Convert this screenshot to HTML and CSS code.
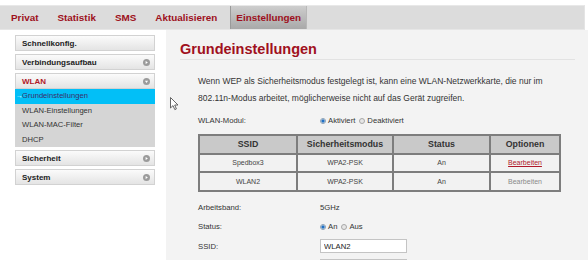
FILE: index.html
```html
<!DOCTYPE html>
<html lang="de">
<head>
    <meta charset="UTF-8">
    <meta name="viewport" content="width=device-width, initial-scale=1.0">
    <title>Grundeinstellungen</title>
    <link rel="stylesheet" href="styles.css">
</head>
<body>
    <nav class="mainnav">
        <a class="nav-link">Privat</a>
        <a class="nav-link">Statistik</a>
        <a class="nav-link">SMS</a>
        <a class="nav-link">Aktualisieren</a>
        <a class="nav-link active">Einstellungen</a>
    </nav>

    <div class="page">
        <aside class="sidebar">
            <div class="menu-item">Schnellkonfig.</div>
            <div class="menu-item">Verbindungsaufbau
                <svg class="toggle" viewBox="0 0 8 8"><circle cx="4" cy="4" r="4" fill="#9b9b9b"/><path d="M3 2.2 L5.6 4 L3 5.8 Z" fill="#fff"/></svg>
            </div>
            <div class="menu-item open">WLAN
                <svg class="toggle" viewBox="0 0 8 8"><circle cx="4" cy="4" r="4" fill="#9b9b9b"/><path d="M2.2 3 L5.8 3 L4 5.6 Z" fill="#fff"/></svg>
            </div>
            <ul class="submenu">
                <li class="current"><span class="arrow">&rarr;</span>Grundeinstellungen</li>
                <li>WLAN-Einstellungen</li>
                <li>WLAN-MAC-Filter</li>
                <li>DHCP</li>
            </ul>
            <div class="menu-item">Sicherheit
                <svg class="toggle" viewBox="0 0 8 8"><circle cx="4" cy="4" r="4" fill="#9b9b9b"/><path d="M3 2.2 L5.6 4 L3 5.8 Z" fill="#fff"/></svg>
            </div>
            <div class="menu-item">System
                <svg class="toggle" viewBox="0 0 8 8"><circle cx="4" cy="4" r="4" fill="#9b9b9b"/><path d="M3 2.2 L5.6 4 L3 5.8 Z" fill="#fff"/></svg>
            </div>
        </aside>

        <main class="content">
            <h1>Grundeinstellungen</h1>
            <div class="section">
                <p class="note">Wenn WEP als Sicherheitsmodus festgelegt ist, kann eine WLAN-Netzwerkkarte, die nur im 802.11n-Modus arbeitet, m&ouml;glicherweise nicht auf das Ger&auml;t zugreifen.</p>

                <div class="form-row">
                    <span class="label">WLAN-Modul:</span>
                    <span class="field">
                        <span class="radio checked"></span>Aktiviert
                        <span class="radio"></span>Deaktiviert
                    </span>
                </div>

                <table class="ssid-table">
                    <tr>
                        <th class="c1">SSID</th>
                        <th class="c2">Sicherheitsmodus</th>
                        <th class="c3">Status</th>
                        <th class="c4">Optionen</th>
                    </tr>
                    <tr>
                        <td>Spedbox3</td>
                        <td>WPA2-PSK</td>
                        <td>An</td>
                        <td><a class="edit">Bearbeiten</a></td>
                    </tr>
                    <tr>
                        <td>WLAN2</td>
                        <td>WPA2-PSK</td>
                        <td>An</td>
                        <td><span class="edit-off">Bearbeiten</span></td>
                    </tr>
                </table>

                <div class="form-row first">
                    <span class="label">Arbeitsband:</span>
                    <span class="field">5GHz</span>
                </div>
                <div class="form-row">
                    <span class="label">Status:</span>
                    <span class="field">
                        <span class="radio checked"></span>An
                        <span class="radio"></span>Aus
                    </span>
                </div>
                <div class="form-row">
                    <span class="label">SSID:</span>
                    <span class="field"><input class="text-input" type="text" value="WLAN2"></span>
                </div>
                <div class="form-row">
                    <span class="label"></span>
                    <span class="field"><input class="text-input" type="text" value=""></span>
                </div>
            </div>
        </main>
    </div>

    <svg class="cursor" viewBox="0 0 9 14"><path d="M0.5 0.5 L0.5 11 L3 8.6 L4.8 12.6 L6.4 11.9 L4.7 8 L8 8 Z" fill="#fff" stroke="#555" stroke-width="0.9"/></svg>
</body>
</html>
```

FILE: styles.css
```css
* {
    margin: 0;
    padding: 0;
    box-sizing: border-box;
}

body {
    font-family: 'Liberation Sans', Arial, sans-serif;
    background: #ffffff;
    color: #333333;
    width: 588px;
    height: 260px;
    overflow: hidden;
    position: relative;
}

/* top navigation */
.mainnav {
    display: flex;
    align-items: stretch;
    margin: 5px 3px 0 0;
    height: 25px;
    padding-left: 5px;
    background: #dcdcdc;
    border-top: 1px solid #e8e8e8;
    border-right: 1px solid #e4e4e4;
    border-bottom: 1px solid #e6e6e6;
}

.nav-link {
    display: flex;
    align-items: center;
    padding: 0 6px;
    margin-right: 7px;
    font-size: 9.9px;
    font-weight: bold;
    color: #9e1020;
}

.nav-link.active {
    background: linear-gradient(#cdcdcd, #a9a9a9);
    border-left: 1px solid #9a9a9a;
    border-right: 1px solid #b8b8b8;
    padding: 0 5px;
}

/* page layout */
.page {
    display: flex;
    height: 230px;
}

.sidebar {
    width: 166px;
    flex-shrink: 0;
    padding: 5px 11px 0 15px;
    background: #ffffff;
}

.menu-item {
    display: flex;
    align-items: center;
    justify-content: space-between;
    height: 16px;
    margin-bottom: 3px;
    padding: 0 4px 0 6px;
    font-size: 8px;
    font-weight: bold;
    color: #222222;
    background: linear-gradient(#fbfbfb, #e4e4e4);
    border: 1px solid #d2d2d2;
}

.menu-item.open {
    color: #b0182a;
    margin-bottom: 0;
}

.toggle {
    width: 7px;
    height: 7px;
}

.submenu {
    list-style: none;
    background: #d5d5d5;
    margin-bottom: 3px;
}

.submenu li {
    height: 14.5px;
    line-height: 14.5px;
    padding-left: 7px;
    font-size: 7.6px;
    color: #333333;
}

.submenu li.current {
    background: #02bff7;
    color: #3b2d69;
    padding-left: 1px;
}

.arrow {
    display: inline-block;
    width: 6px;
    color: #e8f6ff;
    font-size: 7px;
}

/* content */
.content {
    flex: 1;
    background: #f3f3f3;
    padding: 10px 13px 0 14px;
}

h1 {
    font-size: 14.5px;
    line-height: 18px;
    font-weight: bold;
    color: #a01020;
    padding-bottom: 1px;
    border-bottom: 1px solid #e2e2e2;
}

.section {
    padding-left: 18px;
}

.note {
    margin-top: 13px;
    font-size: 8.5px;
    line-height: 17px;
    color: #333333;
    width: 365px;
}

.form-row {
    display: flex;
    align-items: center;
    height: 19.5px;
    font-size: 7.7px;
    color: #333333;
}

.form-row.first {
    margin-top: 6px;
}

.note + .form-row {
    margin-top: 4px;
}

.label {
    width: 122px;
    flex-shrink: 0;
}

.field {
    display: flex;
    align-items: center;
}

.radio {
    display: inline-block;
    width: 6px;
    height: 6px;
    border-radius: 50%;
    border: 1px solid #a8a8a8;
    background: #e6e6e6;
    margin-right: 2px;
}

.field .radio:not(:first-child) {
    margin-left: 4px;
}

.radio.checked {
    background: radial-gradient(circle, #1f6fc4 0 1.4px, #dfe8f0 1.8px);
    border-color: #8aa0b5;
}

.text-input {
    width: 87px;
    height: 14px;
    padding: 0 3px;
    font-family: inherit;
    font-size: 7.7px;
    color: #222222;
    background: #ffffff;
    border: 1px solid #c4c4c4;
    outline: none;
}

/* ssid table */
.ssid-table {
    margin-top: 3px;
    width: 363px;
    border-collapse: collapse;
    border: 2px solid #7d7d7d;
}

.ssid-table th,
.ssid-table td {
    border: 2px solid #7d7d7d;
    text-align: center;
}

.ssid-table th {
    height: 19px;
    background: #c9c9c9;
    font-size: 8.8px;
    font-weight: bold;
    color: #333333;
}

.ssid-table td {
    height: 18.5px;
    background: #f2f2f2;
    font-size: 7px;
    color: #444444;
}

.c1 { width: 98px; }
.c2 { width: 96px; }
.c3 { width: 97px; }

.edit {
    color: #b0182a;
    text-decoration: underline;
}

.edit-off {
    color: #8a8a8a;
}

.cursor {
    position: absolute;
    left: 170px;
    top: 97px;
    width: 9px;
    height: 14px;
}
```
